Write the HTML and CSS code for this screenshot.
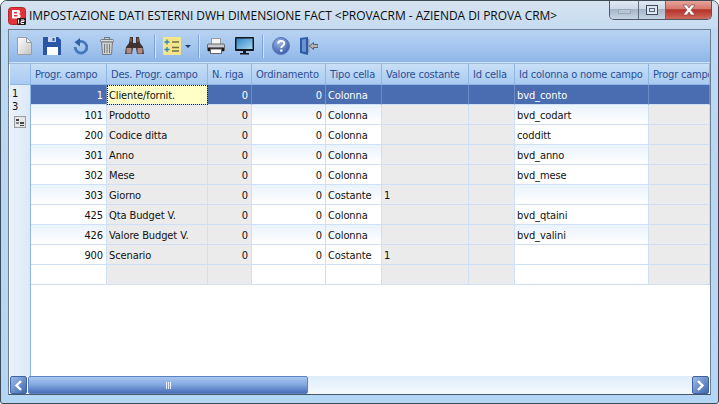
FILE: index.html
```html
<!DOCTYPE html>
<html lang="it">
<head>
    <meta charset="UTF-8">
    <meta name="viewport" content="width=device-width, initial-scale=1.0">
    <title>Impostazione dati esterni DWH dimensione fact</title>
    <link rel="stylesheet" href="styles.css">
</head>
<body>
    <div class="window">
        <div class="titlebar">
            <svg class="app-icon" width="18" height="18" viewBox="0 0 18 18">
                <rect x="0.5" y="0.5" width="17" height="17" rx="3" fill="#e2323a" stroke="#b3262c"/>
                <path d="M4 3h6c2.500 0 3 3.200 1 4 2.400.7 2 4.500-1 4.500H4z" fill="#fff"/>
                <path d="M6 5h3v1.500H6zM6 8h3.500v1.500H6z" fill="#e2323a"/>
                <rect x="9" y="11" width="9" height="7" rx="1" fill="#2a1a1a"/>
                <path d="M10.500 12.500v4M13 13h3v1.500h-3v2h3" stroke="#fff" fill="none"/>
            </svg>
            <span class="title">IMPOSTAZIONE DATI ESTERNI DWH DIMENSIONE FACT &lt;PROVACRM - AZIENDA DI PROVA CRM&gt;</span>
            <div class="caption-buttons">
                <div class="cap-btn cap-min"><span></span></div>
                <div class="cap-btn cap-max"><span></span></div>
                <div class="cap-btn cap-close">
                    <svg width="16" height="12" viewBox="0 0 16 12"><path d="M2 1h4l2 3 2-3h4l-4 5 4 5h-4L8 8l-2 3H2l4-5z" fill="#fff" stroke="#7b3a3a" stroke-width="0.6"/></svg>
                </div>
            </div>
        </div>

        <div class="client">
            <div class="toolbar">
                <svg class="tool" width="15" height="18" viewBox="0 0 15 18">
                    <defs><linearGradient id="paper" x1="0" y1="0" x2="1" y2="1"><stop offset="0" stop-color="#fff"/><stop offset="1" stop-color="#c2c4c1"/></linearGradient></defs>
                    <path d="M.5.5h9l5 5v12H.5z" fill="url(#paper)" stroke="#9a9da2"/>
                    <path d="M9.500.5v5h5z" fill="#f2f2f2" stroke="#9a9da2"/>
                </svg>
                <svg class="tool tool-save" width="18" height="18" viewBox="0 0 18 18">
                    <path d="M0 0h15l3 3v15H0z" fill="#2b56a8"/>
                    <rect x="5" y="0" width="8" height="5" fill="#c6d6ee"/>
                    <rect x="9.500" y="1" width="2" height="3" fill="#2b56a8"/>
                    <rect x="4" y="10" width="11" height="8" fill="#fff"/>
                </svg>
                <svg class="tool tool-undo" width="15" height="17" viewBox="0 0 15 17">
                    <path d="M5 4.300a5.800 5.800 0 1 1-2.800 4.700" fill="none" stroke="#4478bb" stroke-width="2.800"/>
                    <path d="M7 0v8.500L1.500 4.300z" fill="#2f62ab"/>
                </svg>
                <svg class="tool" width="14" height="18" viewBox="0 0 14 18">
                    <rect x="4.500" y="0.500" width="5" height="2" fill="none" stroke="#777a7e"/>
                    <rect x="0.500" y="2.500" width="13" height="2.500" rx="1" fill="#dcdddd" stroke="#777a7e"/>
                    <path d="M1.500 5h11l-1 12.500h-9z" fill="#cfd0d0" stroke="#777a7e"/>
                    <path d="M4.500 7v9M7 7v9M9.500 7v9" stroke="#777a7e"/>
                </svg>
                <svg class="tool" width="19" height="18" viewBox="0 0 19 18">
                    <path d="M5 0h3v6h3V0h3l1 6 3 4 1 7h-7l-1-6H8l-1 6H0l1-7 3-4z" fill="#41322f"/>
                    <rect x="1.500" y="11" width="5" height="5.500" fill="#b58a7e"/>
                    <rect x="12.500" y="11" width="5" height="5.500" fill="#b58a7e"/>
                    <path d="M6 1v4M13 1v4" stroke="#8d7a70"/>
                </svg>
                <i class="sep"></i>
                <svg class="tool tool-calc" width="18" height="18" viewBox="0 0 18 18">
                    <rect width="18" height="18" rx="1" fill="#f2e58c"/>
                    <path d="M1.500 5h5M4 2.500v5M1.500 12.500h5M4 10v5" stroke="#2f7fb5" stroke-width="1.300"/>
                    <path d="M9 5h7M9 10.500h7M9 14h7" stroke="#6f7040" stroke-width="1.400"/>
                </svg>
                <i class="drop"></i>
                <i class="sep"></i>
                <svg class="tool tool-print" width="18" height="16" viewBox="0 0 18 16">
                    <rect x="4.500" y="0.500" width="9" height="6" fill="#f4f4f4" stroke="#999"/>
                    <rect x="0.500" y="6" width="17" height="7" rx="1" fill="#c9cace" stroke="#666"/>
                    <rect x="1" y="9.500" width="16" height="3.500" fill="#15151a"/>
                    <rect x="3.500" y="11" width="11" height="4.500" fill="#fff" stroke="#666"/>
                </svg>
                <svg class="tool tool-screen" width="19" height="18" viewBox="0 0 19 18">
                    <defs><linearGradient id="screen" x1="0" y1="0" x2="1" y2="1"><stop offset="0" stop-color="#2f86c8"/><stop offset="1" stop-color="#a8d8f0"/></linearGradient></defs>
                    <rect width="19" height="14" rx="1" fill="#16181c"/>
                    <rect x="1.500" y="1.500" width="16" height="10.500" fill="url(#screen)"/>
                    <path d="M8 14h3v2h3v1.500H5V16h3z" fill="#16181c"/>
                </svg>
                <i class="sep"></i>
                <svg class="tool tool-help" width="18" height="18" viewBox="0 0 18 18">
                    <defs><radialGradient id="help" cx="0.400" cy="0.300" r="0.800"><stop offset="0" stop-color="#9db7ea"/><stop offset="1" stop-color="#2c4fa3"/></radialGradient></defs>
                    <circle cx="9" cy="9" r="8.500" fill="url(#help)" stroke="#5d78b8"/>
                    <path d="M6 6.500c.5-3.500 6.500-3.300 6.300 0 0 2.300-3 2.300-3 4.500" fill="none" stroke="#fff" stroke-width="2"/>
                    <rect x="8.200" y="12.500" width="2.200" height="2.200" fill="#fff"/>
                </svg>
                <svg class="tool" width="18" height="18" viewBox="0 0 18 18">
                    <path d="M0 1l8-1v18l-8-2z" fill="#2b5aa8"/>
                    <path d="M2 2.500l4-.5v13l-4-.5z" fill="#6c93cf"/>
                    <path d="M8 2h1.500v14H8z" fill="#8aa0bc"/>
                    <path d="M9.500 9l4-3.500v2H18v3h-4.500v2z" fill="#b4b6b8" stroke="#4a4a4a" stroke-width="0.800"/>
                </svg>
            </div>

            <div class="grid-area">
                <div class="row-numbers">
                    <div class="corner"></div>
                    <div class="row-info">
                        <span>1</span>
                        <span>3</span>
                        <svg width="12" height="12" viewBox="0 0 12 12">
                            <rect x="0.500" y="0.500" width="11" height="11" fill="#e4e6e8" stroke="#9a9da2"/>
                            <rect x="2" y="3" width="3" height="2" fill="#444"/>
                            <rect x="6" y="6" width="4" height="2" fill="#444"/>
                            <rect x="6" y="9" width="4" height="1" fill="#444"/>
                            <rect x="2" y="6" width="3" height="2" fill="#888"/>
                        </svg>
                    </div>
                </div>
                <div class="sheet">
                    <table class="data">
                        <colgroup>
                            <col class="c1"><col class="c2"><col class="c3"><col class="c4"><col class="c5">
                            <col class="c6"><col class="c7"><col class="c8"><col class="c9">
                        </colgroup>
                        <thead>
                            <tr>
                                <th>Progr. campo</th><th>Des. Progr. campo</th><th>N. riga</th><th>Ordinamento</th><th>Tipo cella</th>
                                <th>Valore costante</th><th>Id cella</th><th>Id colonna o nome campo</th><th>Progr campo</th>
                            </tr>
                        </thead>
                        <tbody>
                            <tr class="selected">
                                <td class="num">1</td><td class="current">Cliente/fornit.</td><td class="num">0</td><td class="num">0</td><td>Colonna</td><td></td><td></td><td>bvd_conto</td><td></td>
                            </tr>
                            <tr class="alt">
                                <td class="num">101</td><td class="ro">Prodotto</td><td class="num ro">0</td><td class="num">0</td><td>Colonna</td><td class="ro"></td><td class="ro"></td><td>bvd_codart</td><td class="ro"></td>
                            </tr>
                            <tr>
                                <td class="num">200</td><td class="ro">Codice ditta</td><td class="num ro">0</td><td class="num">0</td><td>Colonna</td><td class="ro"></td><td class="ro"></td><td>codditt</td><td class="ro"></td>
                            </tr>
                            <tr class="alt">
                                <td class="num">301</td><td class="ro">Anno</td><td class="num ro">0</td><td class="num">0</td><td>Colonna</td><td class="ro"></td><td class="ro"></td><td>bvd_anno</td><td class="ro"></td>
                            </tr>
                            <tr>
                                <td class="num">302</td><td class="ro">Mese</td><td class="num ro">0</td><td class="num">0</td><td>Colonna</td><td class="ro"></td><td class="ro"></td><td>bvd_mese</td><td class="ro"></td>
                            </tr>
                            <tr class="alt">
                                <td class="num">303</td><td class="ro">Giorno</td><td class="num ro">0</td><td class="num">0</td><td>Costante</td><td class="ro">1</td><td class="ro"></td><td></td><td class="ro"></td>
                            </tr>
                            <tr>
                                <td class="num">425</td><td class="ro">Qta Budget V.</td><td class="num ro">0</td><td class="num">0</td><td>Colonna</td><td class="ro"></td><td class="ro"></td><td>bvd_qtaini</td><td class="ro"></td>
                            </tr>
                            <tr class="alt">
                                <td class="num">426</td><td class="ro">Valore Budget V.</td><td class="num ro">0</td><td class="num">0</td><td>Colonna</td><td class="ro"></td><td class="ro"></td><td>bvd_valini</td><td class="ro"></td>
                            </tr>
                            <tr>
                                <td class="num">900</td><td class="ro">Scenario</td><td class="num ro">0</td><td class="num">0</td><td>Costante</td><td class="ro">1</td><td class="ro"></td><td></td><td class="ro"></td>
                            </tr>
                            <tr>
                                <td></td><td class="ro"></td><td class="ro"></td><td></td><td></td><td class="ro"></td><td class="ro"></td><td></td><td class="ro"></td>
                            </tr>
                        </tbody>
                    </table>
                </div>
            </div>

            <div class="scrollbar">
                <div class="arrow">
                    <svg width="9" height="11" viewBox="0 0 9 11"><path d="M7 1L2.500 5.500 7 10" fill="none" stroke="#fff" stroke-width="2.400"/></svg>
                </div>
                <div class="thumb"><span class="grip"></span></div>
                <div class="track"></div>
                <div class="arrow">
                    <svg width="9" height="11" viewBox="0 0 9 11"><path d="M2 1l4.500 4.500L2 10" fill="none" stroke="#fff" stroke-width="2.400"/></svg>
                </div>
            </div>
        </div>
    </div>
</body>
</html>
```

FILE: styles.css
```css
* {
    box-sizing: border-box;
}
html, body {
    margin: 0;
    height: 100%;
    overflow: hidden;
}
body {
    font-family: 'DejaVu Sans Condensed', 'DejaVu Sans', sans-serif;
    font-size: 11px;
    color: #111;
    background: #fff;
}
.window {
    height: 404px;
    width: 719px;
    display: flex;
    flex-direction: column;
    background: linear-gradient(180deg, #cfe0f2 0, #bcd8f3 30px, #b4d6f5 100%);
    border: 1px solid #3e4a55;
    border-radius: 7px 7px 3px 3px;
    overflow: hidden;
}
.titlebar {
    height: 28px;
    flex: none;
    display: flex;
    align-items: center;
    padding-left: 7px;
    position: relative;
    background: linear-gradient(180deg, #d7e3ef 0, #c5dbf1 100%);
}
.app-icon {
    flex: none;
    margin-top: 1px;
}
.title {
    margin-left: 3px;
    font-family: 'Open Sans', sans-serif;
    font-size: 12px;
    letter-spacing: -0.05px;
    color: #0b0b0b;
    white-space: nowrap;
}
.caption-buttons {
    position: absolute;
    top: -1px;
    right: 6px;
    height: 20px;
    width: 103px;
    display: flex;
    border: 1px solid #4f5a66;
    border-top: none;
    border-radius: 0 0 5px 5px;
    overflow: hidden;
}
.cap-btn {
    display: flex;
    align-items: center;
    justify-content: center;
    border-right: 1px solid #5f6b78;
    background: linear-gradient(180deg, #e3ebf3 0, #ccd9e6 45%, #a6b6c8 50%, #c5d5e5 100%);
}
.cap-min {
    width: 29px;
}
.cap-min span {
    width: 13px;
    height: 5px;
    margin-top: 3px;
    background: #bac6d2;
    border: 1px solid #9aa7b6;
}
.cap-max {
    width: 27px;
}
.cap-max span {
    width: 12px;
    height: 10px;
    border: 1px solid #3f4d60;
    box-shadow: inset 0 0 0 2px #dfe6ee, inset 0 0 0 3px #57657a;
    background: #dfe6ee;
}
.cap-close {
    flex: 1;
    border-right: none;
    background: linear-gradient(180deg, #e8aaa1 0, #d67a70 45%, #b5322a 52%, #cf6a5a 100%);
}
.client {
    flex: 1;
    display: flex;
    flex-direction: column;
    margin: 0 7px 8px;
    border: 1px solid #6d7f93;
    border-bottom-color: #47586b;
    background: #fff;
    min-height: 0;
}
.toolbar {
    height: 33px;
    flex: none;
    display: flex;
    align-items: center;
    padding: 0 0 0 8px;
    background: linear-gradient(180deg, #b8d3f2 0, #a3c5ee 55%, #8fb6e8 100%);
    border-bottom: 1px solid #cfe2f7;
}
.tool {
    flex: none;
    margin-right: 11px;
}
.tool-save {
    margin-right: 12px;
}
.tool-undo {
    margin-right: 12px;
}
.tool-screen {
    margin-right: 9px;
}
.tool-help {
    margin: 0 10px 0 1px;
}
.sep {
    flex: none;
    width: 1px;
    height: 23px;
    margin: 0 8px 0 -1px;
    background: #7fa4d4;
    box-shadow: 1px 0 0 #cfe2f7;
}
.tool-calc {
    margin-right: 4px;
}
.tool-print {
    margin-right: 10px;
}
.drop {
    flex: none;
    width: 0;
    height: 0;
    margin-right: 8px;
    border: 3px solid transparent;
    border-top: 3px solid #1d3a6e;
    border-bottom: none;
}
.grid-area {
    flex: 1;
    display: flex;
    min-height: 0;
    background: #fff;
    padding-left: 1px;
    border-top: 1px solid #9dbce2;
}
.row-numbers {
    flex: none;
    width: 21px;
    background: linear-gradient(90deg, #e9f2fb, #dce9f7);
    border-right: 1px solid #8fb5e3;
}
.corner {
    height: 21px;
    background: linear-gradient(180deg, #c2daf5, #a9cbf0);
    border-bottom: 1px solid #8fb5e3;
}
.row-info {
    display: flex;
    flex-direction: column;
    align-items: center;
    padding-top: 2px;
    line-height: 13px;
    font-size: 11px;
}
.row-info span {
    width: 100%;
    padding-left: 2px;
}
.row-info svg {
    margin-top: 3px;
}
.sheet {
    flex: 1;
    min-width: 0;
    overflow: hidden;
}
.data {
    table-layout: fixed;
    border-collapse: separate;
    border-spacing: 0;
    width: 679px;
}
.c1 { width: 76px; }
.c2 { width: 101px; }
.c3 { width: 44px; }
.c4 { width: 74px; }
.c5 { width: 56px; }
.c6 { width: 87px; }
.c7 { width: 46px; }
.c8 { width: 134px; }
.c9 { width: 61px; }
.data th {
    height: 21px;
    padding: 0 0 0 4px;
    font-weight: normal;
    text-align: left;
    letter-spacing: -0.2px;
    color: #2a4f96;
    white-space: nowrap;
    overflow: hidden;
    background: linear-gradient(180deg, #c9dff7, #a9cbf0);
    border-right: 1px solid #8fb5e3;
    border-bottom: 1px solid #8fb5e3;
}
.data td {
    height: 20px;
    padding: 1px 3px 0 2px;
    letter-spacing: -0.1px;
    white-space: nowrap;
    overflow: hidden;
    background: #fff;
    border-right: 1px solid #cfe0f6;
    border-bottom: 1px solid #cfe0f6;
}
.data tr.alt td {
    background: linear-gradient(180deg, #eaf3fc, #fff);
}
.data td.num {
    text-align: right;
}
.data td.ro,
.data tr.alt td.ro {
    background: #ebebeb;
}
.data tr.selected td {
    background: #4a6cb0;
    color: #fff;
    border-right-color: #6d8cc8;
    border-bottom-color: #cfe0f6;
}
.data tr.selected td.current {
    background: #ffffc8;
    color: #111;
    outline: 1px dotted #222;
    outline-offset: -1px;
}
.scrollbar {
    flex: none;
    height: 18px;
    display: flex;
    align-items: stretch;
    padding: 0 1px 0 1px;
    background: #fff;
}
.arrow {
    flex: none;
    width: 17px;
    display: flex;
    align-items: center;
    justify-content: center;
    border: 1px solid #3f62a6;
    border-radius: 2px;
    background: linear-gradient(135deg, #9dbcea, #3f66b0);
}
.thumb {
    flex: none;
    width: 280px;
    margin-left: 1px;
    display: flex;
    align-items: center;
    justify-content: center;
    border: 1px solid #5d82c2;
    border-radius: 2px;
    background: linear-gradient(180deg, #a9c6ee 0, #81a7e0 50%, #4a6eb8 100%);
}
.grip {
    width: 5px;
    height: 7px;
    background: repeating-linear-gradient(90deg, #e8f0fb 0 1px, transparent 1px 2px);
}
.track {
    flex: 1;
    background: linear-gradient(180deg, #deecfa, #f4f9fe);
}
```
